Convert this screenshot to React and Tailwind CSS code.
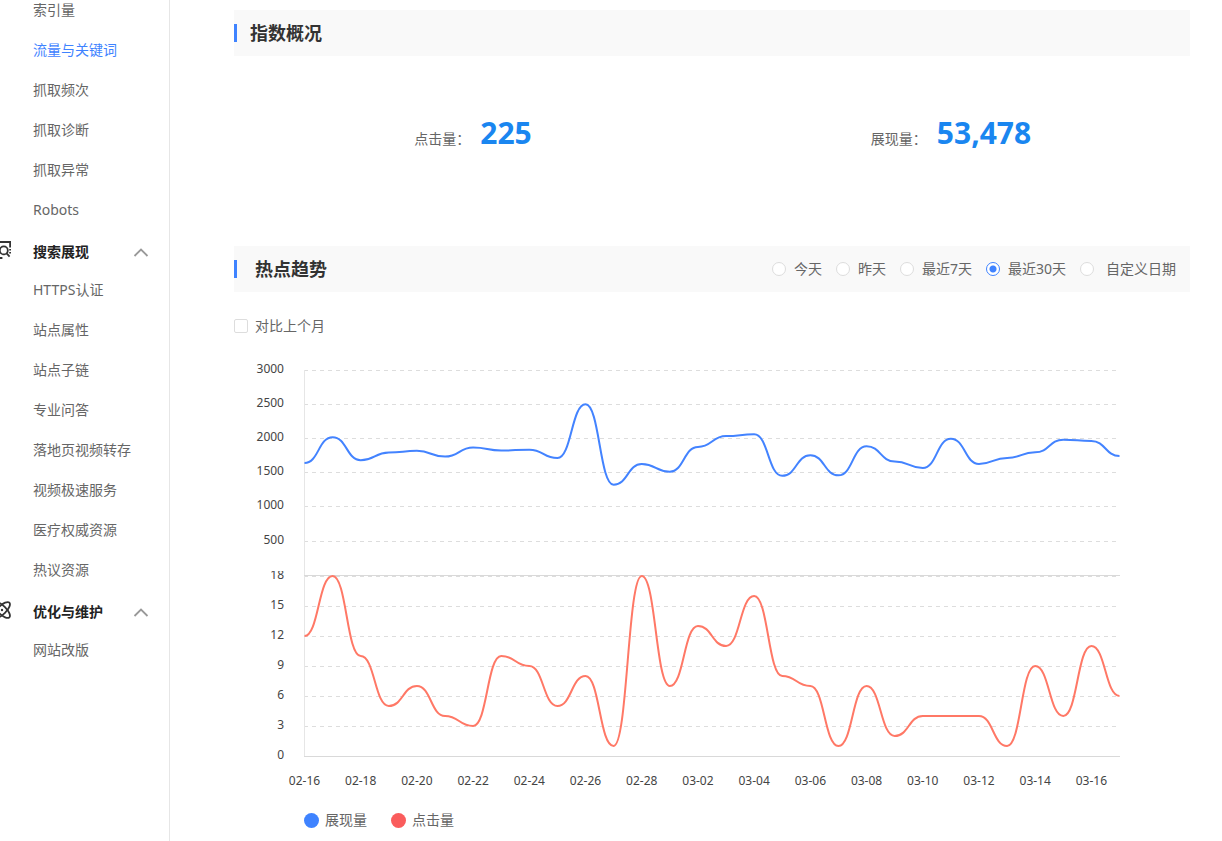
import { useState } from 'react';

const topItems = ['索引量', '流量与关键词', '抓取频次', '抓取诊断', '抓取异常', 'Robots'];

const searchItems = [
    'HTTPS认证',
    '站点属性',
    '站点子链',
    '专业问答',
    '落地页视频转存',
    '视频极速服务',
    '医疗权威资源',
    '热议资源',
];

const ranges = ['今天', '昨天', '最近7天', '最近30天'];

const shows = [
    1645, 2025, 1688, 1800, 1824, 1740, 1872, 1828, 1842, 1718, 2505, 1328, 1630, 1520, 1882,
    2040, 2066, 1458, 1760, 1466, 1890, 1670, 1574, 2002, 1633, 1720, 1802, 1988, 1968, 1748,
];
const clicks = [
    12, 18, 10, 5, 7, 4, 3, 10, 9, 5, 8, 1, 18, 7, 13,
    11, 16, 8, 7, 1, 7, 2, 4, 4, 4, 1, 9, 4, 11, 6,
];
const dates = [
    '02-16', '02-18', '02-20', '02-22', '02-24', '02-26', '02-28', '03-02',
    '03-04', '03-06', '03-08', '03-10', '03-12', '03-14', '03-16',
];

const LEFT = 70.5;
const RIGHT = 885.5;
const STEP = (RIGHT - LEFT) / (shows.length - 1);

const showTicks = [
    { label: '3000', y: 24.5 },
    { label: '2500', y: 58.5 },
    { label: '2000', y: 92.5 },
    { label: '1500', y: 126.5 },
    { label: '1000', y: 160.5 },
    { label: '500', y: 195.5 },
];
const clickTicks = [18, 15, 12, 9, 6, 3, 0].map((value) => ({ label: value, y: 410.5 - value * 10 }));

// horizontal tangents at every point, so the line never overshoots the data
const smoothPath = (values, toY) =>
    values.reduce((d, value, i) => {
        const x = LEFT + i * STEP;
        const y = toY(value);
        if (i === 0) return `M${x} ${y}`;
        const half = STEP / 2;
        return `${d} C${x - half} ${toY(values[i - 1])} ${x - half} ${y} ${x} ${y}`;
    }, '');

const ScreenSearchIcon = () => (
    <svg className="-ml-[7px] mb-1 shrink-0" width="18" height="18" viewBox="0 0 18 18" fill="none" stroke="#333" strokeWidth="1.8">
        <path d="M17.1 6.6V1H1v16h8.4" />
        <path d="M17.1 8v1.6M17.1 11v1.6" />
        <circle cx="10.8" cy="9.4" r="4" />
        <path d="M13.6 12.4l3 3.2" />
    </svg>
);

const OrbitIcon = () => (
    <svg className="-ml-[7px] mb-1 shrink-0" width="18" height="18" viewBox="0 0 18 18" fill="none" stroke="#333" strokeWidth="1.8">
        <ellipse cx="9" cy="9" rx="10.4" ry="4.2" transform="rotate(45 9 9)" />
        <ellipse cx="9" cy="9" rx="10.4" ry="4.2" transform="rotate(-45 9 9)" />
        <circle cx="9" cy="9" r="1.2" fill="#333" stroke="none" />
    </svg>
);

const MenuItem = ({ label, active }) => (
    <li>
        <a href="#" className={`flex h-10 items-center pl-[33px] text-sm ${active ? 'text-[#3f83ff]' : 'text-[#666]'}`}>
            {label}
        </a>
    </li>
);

const MenuGroup = ({ icon, label, children }) => {
    const [open, setOpen] = useState(true);

    return (
        <li>
            <button
                type="button"
                aria-expanded={open}
                onClick={() => setOpen(!open)}
                className="flex h-10 w-full items-center pt-1 pr-5 text-sm font-bold text-[#222]"
            >
                <span className="flex w-[33px] shrink-0">{icon}</span>
                {label}
                <svg className={`ml-auto ${open ? '' : 'rotate-180'}`} width="16" height="9" viewBox="0 0 16 9" fill="none" stroke="#999" strokeWidth="1.8">
                    <path d="M1.5 8L8 1.5 14.5 8" />
                </svg>
            </button>
            {open && <ul>{children}</ul>}
        </li>
    );
};

const Metric = ({ label, value }) => (
    <div className="flex items-baseline justify-center gap-2.5">
        <span className="text-sm text-[#666]">{label}：</span>
        <strong className="text-3xl font-bold text-[#1a86f0]">{value}</strong>
    </div>
);

const radioClass =
    'size-3.5 appearance-none rounded-full border border-[#ddd] bg-white checked:border-[#3f83ff] checked:bg-[radial-gradient(circle,#3f83ff_3px,#fff_4px)]';

const TrendChart = () => (
    <svg className="block h-auto w-full" viewBox="0 0 956 454" fontSize="12" fill="#444" role="img" aria-label="热点趋势">
        <defs>
            <clipPath id="lower">
                <rect x="0" y="225" width="956" height="229" />
            </clipPath>
        </defs>
        <g stroke="#ddd" strokeDasharray="4 4">
            {[...showTicks, ...clickTicks.slice(0, -1)].map(({ label, y }) => (
                <path key={label} d={`M70 ${y}H${RIGHT}`} />
            ))}
        </g>
        <path d="M70.5 24V410" stroke="#e6e6e6" />
        <path d="M70 229.5H886M70 410.5H886" stroke="#d9d9d9" />
        <g textAnchor="end">
            {showTicks.map(({ label, y }) => (
                <text key={label} x="50" y={y + 2.5}>{label}</text>
            ))}
            <g clipPath="url(#lower)">
                {clickTicks.map(({ label, y }) => (
                    <text key={label} x="50" y={y + 2.5}>{label}</text>
                ))}
            </g>
        </g>
        <g textAnchor="middle">
            {dates.map((date, i) => (
                <text key={date} x={LEFT + i * 2 * STEP} y="439">{date}</text>
            ))}
        </g>
        <path d={smoothPath(shows, (v) => 229.5 - (v * 205) / 3000)} fill="none" stroke="#4383ff" strokeWidth="2" />
        <path d={smoothPath(clicks, (v) => 410 - v * 10)} fill="none" stroke="#ff7866" strokeWidth="2" />
    </svg>
);

const App = () => {
    const [range, setRange] = useState('最近30天');

    return (
        <div className="flex min-h-screen bg-white font-['Noto_Sans','Noto_Sans_CJK_SC',sans-serif]">
            <aside className="w-[170px] shrink-0 overflow-hidden border-r border-[#e6e6e6]">
                <ul className="-mt-2.5">
                    {topItems.map((item) => (
                        <MenuItem key={item} label={item} active={item === '流量与关键词'} />
                    ))}
                    <MenuGroup icon={<ScreenSearchIcon />} label="搜索展现">
                        {searchItems.map((item) => (
                            <MenuItem key={item} label={item} />
                        ))}
                    </MenuGroup>
                    <MenuGroup icon={<OrbitIcon />} label="优化与维护">
                        <MenuItem label="网站改版" />
                    </MenuGroup>
                </ul>
            </aside>

            <main className="min-w-0 flex-1 pt-2.5 pr-8 pl-16">
                <section>
                    <header className="flex h-[46px] items-center bg-[#f9f9f9]">
                        <span className="mr-[13px] h-[18px] w-[3px] bg-[#3f83ff]"></span>
                        <h2 className="text-lg font-bold text-[#333]">指数概况</h2>
                    </header>
                    <div className="grid grid-cols-2 pt-[59px] pb-[95px]">
                        <Metric label="点击量" value="225" />
                        <Metric label="展现量" value="53,478" />
                    </div>
                </section>

                <section>
                    <header className="flex h-[46px] items-center bg-[#f9f9f9] pr-3.5">
                        <span className="mr-[18px] h-[18px] w-[3px] bg-[#3f83ff]"></span>
                        <h2 className="text-lg font-bold text-[#333]">热点趋势</h2>
                        <div className="ml-auto flex items-center gap-3.5 text-sm text-[#666]">
                            {ranges.map((item) => (
                                <label key={item} className="flex items-center gap-2">
                                    <input type="radio" name="range" className={radioClass} checked={range === item} onChange={() => setRange(item)} />
                                    {item}
                                </label>
                            ))}
                            <label className="flex items-center gap-3">
                                <input type="radio" name="range" className={radioClass} checked={range === 'custom'} onChange={() => setRange('custom')} />
                                自定义日期
                            </label>
                        </div>
                    </header>
                    <label className="mt-6 mb-2.5 flex w-fit items-center gap-[7px] text-sm text-[#666]">
                        <input type="checkbox" className="size-3.5 appearance-none rounded-xs border border-[#ddd] bg-white checked:bg-[#3f83ff]" />
                        对比上个月
                    </label>
                    <TrendChart />
                    <div className="flex gap-6 pt-2.5 pl-[70px] text-sm text-[#666]">
                        <span className="flex items-center gap-1.5">
                            <i className="size-[15px] rounded-full bg-[#3f83ff]"></i>
                            展现量
                        </span>
                        <span className="flex items-center gap-1.5">
                            <i className="size-[15px] rounded-full bg-[#fa5c5c]"></i>
                            点击量
                        </span>
                    </div>
                </section>
            </main>
        </div>
    );
};

export default App;
